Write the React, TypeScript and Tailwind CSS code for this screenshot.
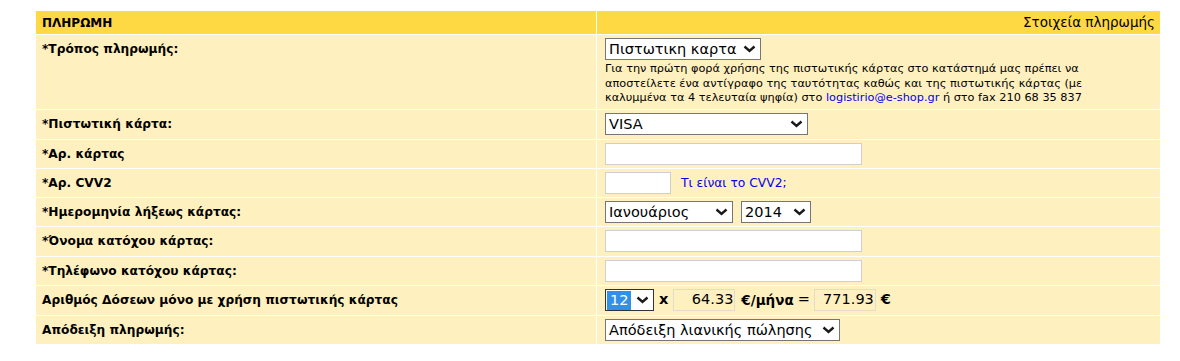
import { ReactNode } from "react";

const font = { fontFamily: '"DejaVu Sans", Verdana, sans-serif' };

function Chevron() {
  return (
    <svg width="13" height="8" viewBox="0 0 13 8" className="shrink-0">
      <path d="M1.5 1.5 L6.5 6 L11.5 1.5" fill="none" stroke="#1a1a1a" strokeWidth="2.4" />
    </svg>
  );
}

function FakeSelect({ value, width, highlight }: { value: string; width: string; highlight?: boolean }) {
  return (
    <div
      className={`flex h-[22px] items-center justify-between border bg-white pr-[4px] text-[14.5px] text-black ${width} ${
        highlight ? "border-[#333] pl-px" : "border-[#767676] pl-[3px]"
      }`}
    >
      <span className={highlight ? "bg-[#3390e8] px-[3px] leading-[19px] text-white" : "whitespace-nowrap leading-[18px]"}>
        {value}
      </span>
      <Chevron />
    </div>
  );
}

function TextBox({ width }: { width: string }) {
  return <div className={`h-[22px] border border-[#cfcfcf] bg-white ${width}`} />;
}

function Row({ label, h, children }: { label: string; h: string; children?: ReactNode }) {
  return (
    <div className={`flex gap-px ${h}`}>
      <div className="w-[560px] bg-[#fff0c0] pl-[6px] pt-[5px] text-[12.2px] font-bold text-black">{label}</div>
      <div className="w-[563px] bg-[#fff0c0] pl-[8px] pt-[3px]">{children}</div>
    </div>
  );
}

export default function App() {
  return (
    <div className="h-[361px] w-[1180px] bg-white pl-[36px] pt-[11px]" style={font}>
      <div className="flex w-[1124px] flex-col gap-px">
        <div className="flex h-[23px] gap-px">
          <div className="flex w-[560px] items-center bg-[#ffd943] pl-[6px] text-[12px] font-bold text-black">ΠΛΗΡΩΜΗ</div>
          <div className="flex w-[563px] items-center justify-end bg-[#ffd943] pr-[5px] text-[13.5px] text-black">
            Στοιχεία πληρωμής
          </div>
        </div>

        <Row label="*Τρόπος πληρωμής:" h="h-[74px]">
          <FakeSelect value="Πιστωτικη καρτα" width="w-[156px]" />
          <p className="mt-[2px] text-[11.3px] leading-[14.5px] text-black">
            Για την πρώτη φορά χρήσης της πιστωτικής κάρτας στο κατάστημά μας πρέπει να
            <br />
            αποστείλετε ένα αντίγραφο της ταυτότητας καθώς και της πιστωτικής κάρτας (με
            <br />
            καλυμμένα τα 4 τελευταία ψηφία) στο <span className="text-[#0000ee]">logistirio@e-shop.gr</span> ή στο fax 210 68 35 837
          </p>
        </Row>

        <Row label="*Πιστωτική κάρτα:" h="h-[29px]">
          <FakeSelect value="VISA" width="w-[203px]" />
        </Row>

        <Row label="*Αρ. κάρτας" h="h-[28px]">
          <TextBox width="w-[257px]" />
        </Row>

        <Row label="*Αρ. CVV2" h="h-[28px]">
          <div className="flex items-center gap-[10px]">
            <TextBox width="w-[66px]" />
            <span className="text-[12.3px] text-[#0000ee]">Τι είναι το CVV2;</span>
          </div>
        </Row>

        <Row label="*Ημερομηνία λήξεως κάρτας:" h="h-[28px]">
          <div className="flex gap-[8px]">
            <FakeSelect value="Ιανουάριος" width="w-[128px]" />
            <FakeSelect value="2014" width="w-[70px]" />
          </div>
        </Row>

        <Row label="*Όνομα κατόχου κάρτας:" h="h-[29px]">
          <TextBox width="w-[257px]" />
        </Row>

        <Row label="*Τηλέφωνο κατόχου κάρτας:" h="h-[28px]">
          <TextBox width="w-[257px]" />
        </Row>

        <Row label="Αριθμός Δόσεων μόνο με χρήση πιστωτικής κάρτας" h="h-[29px]">
          <div className="flex items-center text-[14.5px] text-black">
            <FakeSelect value="12" width="w-[49px]" highlight />
            <span className="ml-[5px] font-bold">x</span>
            <div className="ml-[5px] flex h-[22px] w-[62px] items-center justify-end border border-[#e2dccb] pr-px">64.33</div>
            <span className="ml-[6px] text-[13.5px] font-bold">€/μήνα</span>
            <span className="ml-[4px]">=</span>
            <div className="ml-[4px] flex h-[22px] w-[62px] items-center justify-end border border-[#e2dccb] pr-px">771.93</div>
            <span className="ml-[5px] font-bold">€</span>
          </div>
        </Row>

        <Row label="Απόδειξη πληρωμής:" h="h-[28px]">
          <FakeSelect value="Απόδειξη λιανικής πώλησης" width="w-[235px]" />
        </Row>
      </div>
    </div>
  );
}
